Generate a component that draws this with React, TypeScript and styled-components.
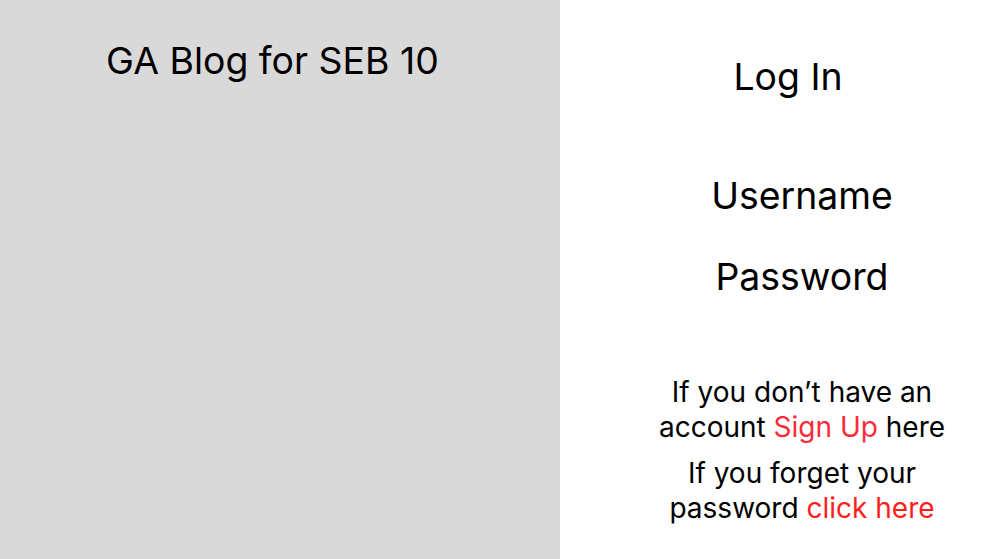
import React from "react";
import styled, { createGlobalStyle } from "styled-components";

const GlobalStyle = createGlobalStyle`
  html, body {
    margin: 0;
    padding: 0;
    height: 100%;
  }
  body {
    font-family: Inter, "Noto Sans", sans-serif;
    color: #000;
    background: #fff;
  }
  #root {
    height: 100%;
  }
`;

const Page = styled.div`
  display: flex;
  height: 100vh;
  width: 100%;
`;

const Sidebar = styled.div`
  width: 560px;
  flex-shrink: 0;
  background: #d9d9d9;
  display: flex;
  flex-direction: column;
  align-items: center;
  padding: 36px 15px 0 0;
  box-sizing: border-box;
`;

const BlogTitle = styled.h1`
  margin: 0;
  font-size: 37.4px;
  font-weight: 400;
  line-height: 50px;
`;

const LoginPanel = styled.div`
  flex: 1;
  display: flex;
  flex-direction: column;
  align-items: center;
  padding-top: 52px;
  padding-left: 38px;
  box-sizing: border-box;
`;

const Heading = styled.h2`
  margin: 0 28px 0 0;
  font-size: 37.4px;
  font-weight: 400;
  line-height: 50px;
`;

const Field = styled.div<{ $gap: number }>`
  font-size: 37.4px;
  line-height: 50px;
  margin-top: ${(p) => p.$gap}px;
`;

const Note = styled.p<{ $gap: number }>`
  margin: ${(p) => p.$gap}px 0 0;
  font-size: 28px;
  line-height: 35px;
  text-align: center;
`;

const Link = styled.a<{ $color: string }>`
  color: ${(p) => p.$color};
  text-decoration: none;
  cursor: pointer;
`;

export default function App() {
  return (
    <>
      <GlobalStyle />
      <Page>
        <Sidebar>
          <BlogTitle>GA Blog for SEB 10</BlogTitle>
        </Sidebar>
        <LoginPanel>
          <Heading>Log In</Heading>
          <Field $gap={69}>Username</Field>
          <Field $gap={31}>Password</Field>
          <Note $gap={73}>
            If you don’t have an
            <br />
            account <Link $color="#fc2b3b">Sign Up</Link> here
          </Note>
          <Note $gap={11}>
            If you forget your
            <br />
            password <Link $color="#ff1e1e">click here</Link>
          </Note>
        </LoginPanel>
      </Page>
    </>
  );
}
